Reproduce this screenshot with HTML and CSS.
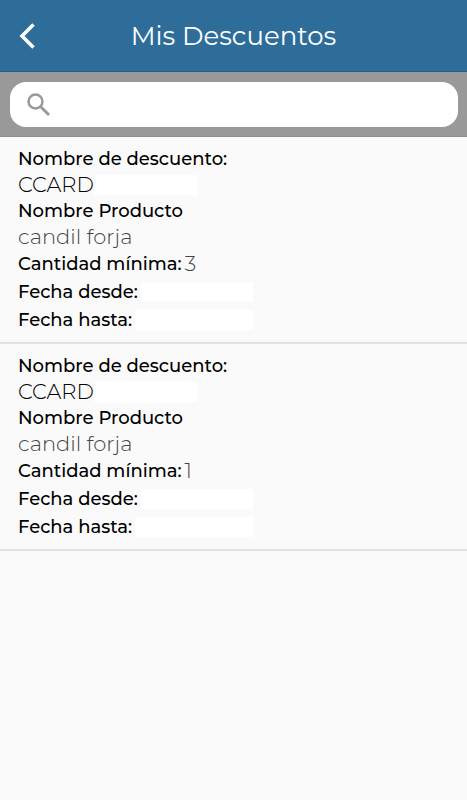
FILE: index.html
```html
<!DOCTYPE html>
<html lang="es">
<head>
<meta charset="utf-8">
<meta name="viewport" content="width=device-width, initial-scale=1">
<title>Mis Descuentos</title>
<link rel="stylesheet" href="styles.css">
</head>
<body>
<header class="bar">
  <button class="back" type="button" aria-label="Volver"><svg width="16" height="26" viewBox="0 0 16 26"><path d="M14.5 1.5 3 13l11.5 11.5"/></svg></button>
  <h1 class="title">Mis Descuentos</h1>
</header>
<form class="search">
  <label class="field">
    <svg width="24" height="24" viewBox="0 0 24 24"><circle cx="8.5" cy="8.5" r="7"/><path d="m13.5 13.500 1.500 1.500"/><path class="handle" d="m14.500 14.500 7.500 7.500"/></svg>
    <input type="search" aria-label="Buscar">
  </label>
</form>
<main>
  <article class="item">
    <h2 class="label">Nombre de descuento:</h2>
    <p class="code"><span>CCARD</span><span class="blank short"></span></p>
    <h2 class="label">Nombre Producto</h2>
    <p class="product">candil forja</p>
    <p class="row"><span class="label">Cantidad mínima:</span><span class="value">3</span></p>
    <p class="row"><span class="label">Fecha desde:</span><span class="blank"></span></p>
    <p class="row"><span class="label">Fecha hasta:</span><span class="blank long"></span></p>
  </article>
  <article class="item">
    <h2 class="label">Nombre de descuento:</h2>
    <p class="code"><span>CCARD</span><span class="blank short"></span></p>
    <h2 class="label">Nombre Producto</h2>
    <p class="product">candil forja</p>
    <p class="row"><span class="label">Cantidad mínima:</span><span class="value">1</span></p>
    <p class="row"><span class="label">Fecha desde:</span><span class="blank"></span></p>
    <p class="row"><span class="label">Fecha hasta:</span><span class="blank long"></span></p>
  </article>
</main>
</body>
</html>
```
FILE: styles.css
```css
* { box-sizing: border-box; }
body { margin: 0; background: #fafafa; font-family: "Montserrat", "Inter", sans-serif; color: #000; }
h1, h2, p { margin: 0; }
.bar { display: grid; grid-template-columns: 54px 1fr 54px; align-items: center; height: 72px; background: #2e6d9a; border-bottom: 1px solid #19648f; }
.back { display: flex; justify-content: center; padding: 0; border: 0; background: none; }
.back svg { fill: none; stroke: #fff; stroke-width: 3.5; }
.title { text-align: center; color: #fff; font-size: 26px; font-weight: 400; line-height: 34px; padding-top: 1px; }
.search { padding: 10px 9px 9px 10px; background: #999; border-bottom: 1px solid #8c8c8c; }
.field { display: flex; align-items: center; gap: 12px; height: 45px; padding: 0 17px; border-radius: 16px; background: #fff; }
.field svg { flex: none; fill: none; stroke: #999; stroke-width: 2.5; }
.field .handle { stroke-width: 3; }
.field input { flex: 1; min-width: 0; border: 0; outline: 0; background: none; font: inherit; font-size: 20px; }
.item { padding: 9px 18px 8px; border-bottom: 2px solid #e2e2e2; }
.label { font-size: 18px; font-weight: 500; line-height: 26px; }
.code { display: flex; align-items: center; font-size: 21px; font-weight: 300; line-height: 26px; }
.product { font-size: 21px; font-weight: 300; line-height: 26px; color: #444; }
.row { display: flex; align-items: center; gap: 3px; height: 28px; }
.value { font-size: 21px; font-weight: 300; line-height: 28px; color: #444; }
.blank { width: 112px; height: 20px; background: #fff; }
.short { width: 104px; }
.long { width: 119px; }
```
